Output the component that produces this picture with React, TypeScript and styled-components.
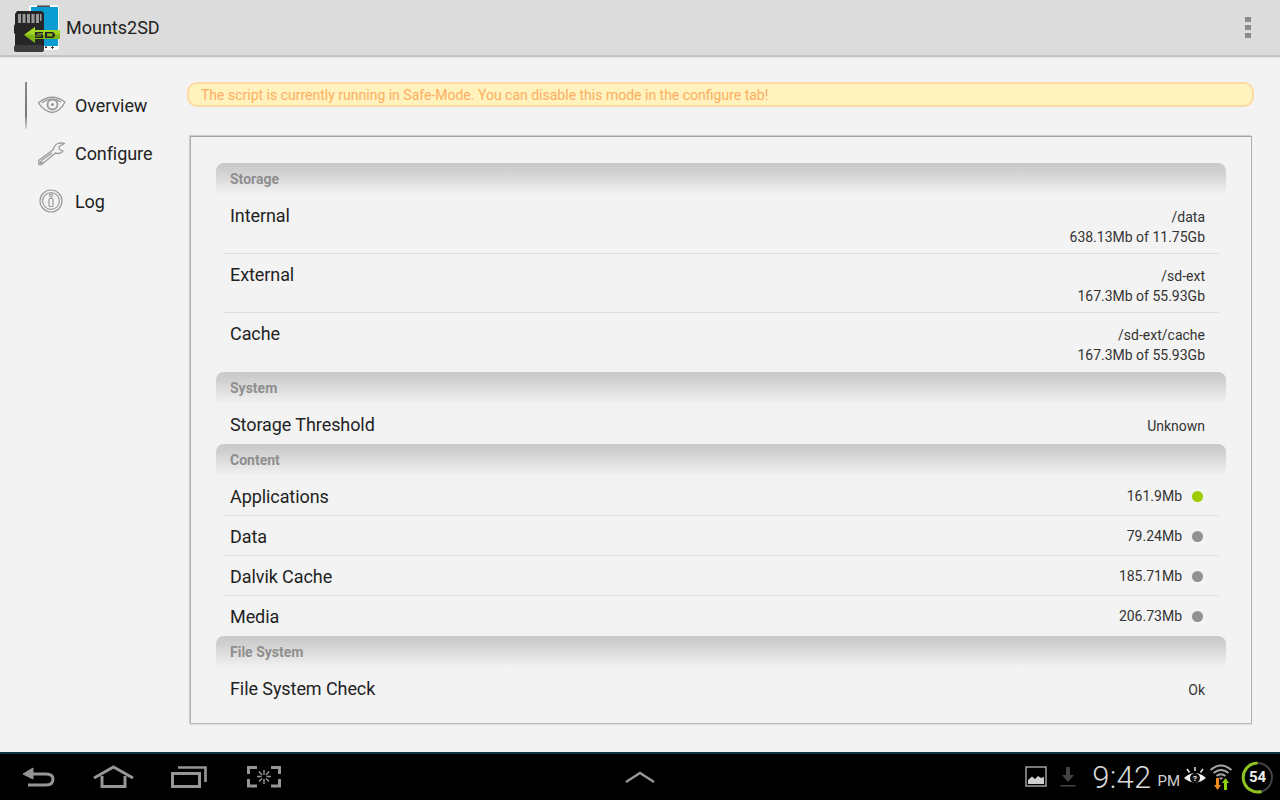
import React from "react";
import styled, { createGlobalStyle } from "styled-components";

const Global = createGlobalStyle`
  html, body { margin: 0; padding: 0; background: #f3f3f3; }
  body { font-family: Roboto, "Liberation Sans", sans-serif; }
`;

const Screen = styled.div`
  width: 1280px; height: 800px; display: flex; flex-direction: column; overflow: hidden; background: #f3f3f3;
`;
const ActionBar = styled.header`
  height: 55px; flex: none; display: flex; align-items: center; padding: 0 14px 0 14px;
  background: #dcdcdc; border-bottom: 2px solid #c4c4c4; box-shadow: 0 1px 1px #e4e4e4;
`;
const Logo = styled.svg`width: 46px; height: 55px; flex: none;`;
const AppTitle = styled.h1`
  margin: 0 0 0 6px; flex: 1; font-size: 18px; font-weight: 400; color: #222;
`;
const Overflow = styled.div`display: flex; flex-direction: column; gap: 3px; margin-right: 15px;`;
const OverflowDot = styled.span`width: 6px; height: 5px; background: #8b8b8b;`;

const Main = styled.main`flex: 1; display: flex; min-height: 0;`;
const Side = styled.nav`width: 187px; flex: none; padding: 25px 0 0 25px; box-sizing: border-box;`;
const NavItem = styled.div<{ $active?: boolean }>`
  height: 48px; display: flex; align-items: center; padding: 0 0 2px 13px; box-sizing: border-box;
  gap: 9px; font-size: 18px; color: #222; letter-spacing: -0.08px;
  background: ${p => (p.$active ? "linear-gradient(#8a8a8a, #777 70%, #d8d8d8) left top / 2px 47px no-repeat" : "none")};
`;
const NavIcon = styled.svg`width: 28px; height: 28px; flex: none;`;

const Content = styled.div`flex: 1; padding: 25px 26px 0 0; display: flex; flex-direction: column;`;
const Alert = styled.div`
  height: 25px; box-sizing: border-box; border: 2px solid #fdd9a4; border-radius: 10px;
  background: #fff2bd; color: #fdae62; font-size: 14px; line-height: 22px; padding-left: 12px; width: 1067px;
`;
const Panel = styled.section`
  margin: 29px 2px 0 3px; height: 588px; box-sizing: border-box; padding: 26px 25px 0 25px; background: #f3f3f3;
  border: 1px solid #b0b0b0; border-top-color: #a4a4a4; border-bottom-color: #bcbcbc;
  box-shadow: -1px -1px 1px #d0d0d0, 0 1px 1px #ddd;
`;
const SectionHead = styled.div`
  height: 32px; box-sizing: border-box; padding: 8px 14px 0; font-size: 14px; line-height: 16px; font-weight: 700; color: #8e8e8e;
  border-radius: 8px 8px 0 0; background: linear-gradient(#c8c8c8, #d2d2d2 30%, #f3f3f3 100%);
`;
const Row = styled.div<{ $h: number; $line?: boolean }>`
  height: ${p => p.$h}px; box-sizing: border-box; margin: 0 7px 0 8px; padding: 0 14px 0 6px;
  display: flex; justify-content: space-between; align-items: flex-start;
  border-bottom: 1px solid ${p => (p.$line ? "#dedede" : "transparent")};
`;
const Name = styled.span`
  font-size: 18px; line-height: 22px; color: #1f1f1f; margin-top: 10px; letter-spacing: -0.08px;
`;
const Value = styled.div`
  font-size: 14px; line-height: 20px; color: #333; text-align: right; margin-top: 12px;
`;
const StatusValue = styled.div`
  display: flex; align-items: center; gap: 10px; font-size: 14px; line-height: 20px; color: #333;
  margin: 10px 2px 0 0;
`;
const Dot = styled.span<{ $on?: boolean }>`
  width: 11px; height: 11px; border-radius: 50%; background: ${p => (p.$on ? "#9ccb00" : "#919191")};
`;

const NavBar = styled.footer`
  height: 46px; flex: none; background: #000; border-top: 2px solid #0f3542; display: flex; align-items: center;
`;
const SysButtons = styled.div`display: flex; align-items: center; gap: 25px; padding-left: 13px; width: 615px; box-sizing: border-box; flex: none;`;
const SysIcon = styled.svg`width: 50px; height: 32px; flex: none;`;
const UpChevron = styled.svg`width: 32px; height: 14px; flex: none; margin-left: 9px;`;
const Tray = styled.div`margin-left: auto; display: flex; align-items: center; padding-right: 6px;`;
const TrayIcon = styled.svg<{ $ml?: number }>`flex: none; margin-left: ${p => p.$ml ?? 0}px;`;
const Clock = styled.span`font-size: 31px; font-weight: 300; color: #d8d8d8; margin-left: 15px; letter-spacing: 0.3px;`;
const Ampm = styled.span`font-size: 15px; color: #d0d0d0; margin: 8px 0 0 6px;`;
const Battery = styled.div`position: relative; width: 33px; height: 33px; margin-left: 8px;`;
const BatteryText = styled.span`
  position: absolute; inset: 0; display: flex; align-items: center; justify-content: center;
  font-size: 15px; font-weight: 700; color: #eee;
`;

type R = { name: string; value?: string; value2?: string; status?: boolean; h: number; line?: boolean };

const Storage: R[] = [
  { name: "Internal", value: "/data", value2: "638.13Mb of 11.75Gb", h: 59, line: true },
  { name: "External", value: "/sd-ext", value2: "167.3Mb of 55.93Gb", h: 59, line: true },
  { name: "Cache", value: "/sd-ext/cache", value2: "167.3Mb of 55.93Gb", h: 59 },
];
const Items: R[] = [
  { name: "Applications", value: "161.9Mb", status: true, h: 40, line: true },
  { name: "Data", value: "79.24Mb", status: false, h: 40, line: true },
  { name: "Dalvik Cache", value: "185.71Mb", status: false, h: 40, line: true },
  { name: "Media", value: "206.73Mb", status: false, h: 40 },
];

function DataRow({ r }: { r: R }) {
  return (
    <Row $h={r.h} $line={r.line}>
      <Name>{r.name}</Name>
      {r.status === undefined ? (
        <Value>
          <div>{r.value}</div>
          {r.value2 && <div>{r.value2}</div>}
        </Value>
      ) : (
        <StatusValue>
          {r.value}
          <Dot $on={r.status} />
        </StatusValue>
      )}
    </Row>
  );
}

export default function App() {
  return (
    <Screen>
      <Global />
      <ActionBar>
        <Logo viewBox="0 0 46 55">
          <rect x="15" y="5" width="30" height="45" rx="3" fill="#fff" />
          <rect x="17" y="7" width="27" height="39" fill="#0a9bd0" />
          <rect x="23" y="5.5" width="13" height="1.3" fill="#222" />
          <path d="M1 14 L3 11 H28 L30 13 V50 H1 V34 L0 33 V26 L1 24 Z" fill="#262626" />
          <path d="M0 47 Q0 45 3 45 H27 Q30 45 30 48 V50 Q30 52 27 52 H3 Q0 52 0 50 Z" fill="#3c3c3c" />
          <g fill="#9a9a9a">
            <rect x="4" y="14" width="3" height="9" /><rect x="8.5" y="14" width="3" height="9" />
            <rect x="13" y="14" width="3" height="9" /><rect x="17.5" y="14" width="3" height="9" />
            <rect x="22" y="14" width="3" height="9" /><rect x="26" y="14" width="1.5" height="7" />
          </g>
          <path d="M10 35 L21 27 V30 H46 V39 H21 V43 Z" fill="#7fb512" />
          <path d="M21 27 V30 H46 V34.5 H10.5 Z" fill="#a4d323" />
          <path d="M21 32 H29 V33.5 H23 V34.5 H29 V38 H21 V36.5 H27 V35.5 H21 Z M31 32 H39 L41 34 V36 L39 38 H31 Z M33 33.5 V36.5 H38.5 V33.5 Z" fill="#222" />
          <rect x="31" y="46.5" width="2" height="1.5" fill="#222" />
          <path d="M37 47.5 H40 M38.5 46 V49" stroke="#222" strokeWidth="0.8" />
        </Logo>
        <AppTitle>Mounts2SD</AppTitle>
        <Overflow><OverflowDot /><OverflowDot /><OverflowDot /></Overflow>
      </ActionBar>
      <Main>
        <Side>
          <NavItem $active>
            <NavIcon viewBox="0 0 28 28" fill="none" stroke="#9a9a9a">
              <path d="M0.5 12 Q13 1 27 11 Q22 21 14 21.5 Q6 20 0.5 12 Z" strokeWidth="1.3" />
              <path d="M4 12 Q13 5 23 11" strokeWidth="1.2" />
              <circle cx="14.5" cy="13.5" r="5" strokeWidth="1.8" />
              <circle cx="14.5" cy="13.5" r="1.6" fill="#9a9a9a" stroke="none" />
            </NavIcon>
            Overview
          </NavItem>
          <NavItem>
            <NavIcon viewBox="0 0 28 28" fill="none" stroke="#9a9a9a" strokeWidth="1.3" strokeLinejoin="round">
              <path d="M0.5 21.5 L15.5 10.5 Q16 6 20 4.5 Q23 3.5 26.5 4.5 L21 7.5 L21.5 10.5 L25 12 Q23.5 14.5 20 14.5 Q18 14.5 17.5 14 L3.5 25.5 Q1.5 26.5 0.5 25 Q-0.5 23 0.5 21.5 Z" />
              <path d="M3.5 21.5 L14 14" />
              <circle cx="2.8" cy="23.5" r="1.1" />
            </NavIcon>
            Configure
          </NavItem>
          <NavItem>
            <NavIcon viewBox="0 0 28 28" fill="none" stroke="#9a9a9a">
              <circle cx="13" cy="14" r="11" strokeWidth="1.2" />
              <circle cx="13" cy="14" r="8.4" strokeWidth="1.2" />
              <rect x="11" y="11.5" width="4" height="8" rx="1" strokeWidth="1.2" />
              <circle cx="13" cy="8.6" r="1.5" strokeWidth="1.1" />
            </NavIcon>
            Log
          </NavItem>
        </Side>
        <Content>
          <Alert>The script is currently running in Safe-Mode. You can disable this mode in the configure tab!</Alert>
          <Panel>
            <SectionHead>Storage</SectionHead>
            {Storage.map(r => <DataRow key={r.name} r={r} />)}
            <SectionHead>System</SectionHead>
            <DataRow r={{ name: "Storage Threshold", value: "Unknown", h: 40 }} />
            <SectionHead>Content</SectionHead>
            {Items.map(r => <DataRow key={r.name} r={r} />)}
            <SectionHead>File System</SectionHead>
            <DataRow r={{ name: "File System Check", value: "Ok", h: 40 }} />
          </Panel>
        </Content>
      </Main>
      <NavBar>
        <SysButtons>
          <SysIcon viewBox="0 0 50 32" fill="none" stroke="#969696" strokeWidth="3">
            <path d="M15 13 H33 Q40 13 40 18 Q40 24 33 24 H15" />
            <path d="M10 13 L20 7 V18 Z" fill="#969696" strokeWidth="1" />
          </SysIcon>
          <SysIcon viewBox="0 0 50 32" fill="none" stroke="#969696" strokeWidth="3">
            <path d="M6 17 L25.5 6 L45 17" />
            <path d="M14 15 V25.5 H37 V15" />
          </SysIcon>
          <SysIcon viewBox="0 0 50 32" fill="none" stroke="#969696" strokeWidth="3">
            <rect x="9.5" y="12.5" width="27" height="13" />
            <path d="M15 6.5 H42.5 V21" strokeWidth="2.6" />
          </SysIcon>
          <SysIcon viewBox="0 0 50 32" fill="none" stroke="#969696" strokeWidth="3">
            <path d="M10.5 13 V6.5 H19 M33 6.5 H41.5 V13 M10.5 18 V25 H19 M33 25 H41.5 V18" />
            <path d="M26 9 V14 M26 18 V23 M19 15.5 H23.5 M28.5 15.5 H33 M21 10.5 L24 14 M31 10.5 L28 14 M21 20.5 L24 17.5 M31 20.5 L28 17.5" strokeWidth="1.4" />
          </SysIcon>
        </SysButtons>
        <UpChevron viewBox="0 0 32 14" fill="none" stroke="#969696" strokeWidth="2.4">
          <path d="M2 12 L16 3 L30 12" />
        </UpChevron>
        <Tray>
          <TrayIcon width="22" height="22" viewBox="0 0 22 22">
            <rect x="1" y="1" width="20" height="19" fill="none" stroke="#b8b8b8" strokeWidth="1.3" />
            <path d="M3 18 V14 L7 10.5 L10 13 L13 10 L16 12 L19 11 V18 Z" fill="#cfcfcf" />
          </TrayIcon>
          <TrayIcon width="18" height="24" viewBox="0 0 18 24" $ml={12}>
            <path d="M7 2 H11 V10 H15 L9 17 L3 10 H7 Z" fill="#444" />
            <rect x="1.5" y="20" width="15" height="1.5" fill="#444" />
          </TrayIcon>
          <Clock>9:42</Clock>
          <Ampm>PM</Ampm>
          <TrayIcon width="24" height="22" viewBox="0 0 24 22" $ml={3}>
            <path d="M1 12 Q12 2 23 12 Q12 21 1 12 Z" fill="#f2f2f2" />
            <circle cx="12" cy="12" r="5" fill="#111" />
            <text x="12" y="15" fontSize="8" fontWeight="700" fill="#f2f2f2" textAnchor="middle" fontFamily="Roboto">?</text>
            <path d="M12 1 V5 M4 3 L6.5 6.5 M20 3 L17.5 6.5" stroke="#f2f2f2" strokeWidth="1.4" />
          </TrayIcon>
          <TrayIcon width="24" height="28" viewBox="0 0 24 28" $ml={2}>
            <g fill="none" stroke="#a8a8a8" strokeWidth="2">
              <path d="M1.5 7 Q12 -2 22.5 7" />
              <path d="M4.5 10 Q12 4 19.5 10" />
              <path d="M7.5 13 Q12 9.5 16.5 13" />
            </g>
            <path d="M12 17 L9.5 14.5 L14.5 14.5 Z" fill="#a8a8a8" />
            <path d="M7 15 H10 V22 H12 L8.5 27 L5 22 H7 Z" fill="#f08c1e" />
            <path d="M15 27 H18 V20 H20 L16.5 15 L13 20 H15 Z" fill="#8fd10c" />
          </TrayIcon>
          <Battery>
            <svg width="33" height="33" viewBox="0 0 33 33" fill="none" strokeWidth="3">
              <circle cx="16.5" cy="16.5" r="14.5" stroke="#444" strokeWidth="2" />
              <path d="M16.5 2 A14.5 14.5 0 1 0 20.5 30.5" stroke="#8fc31f" />
            </svg>
            <BatteryText>54</BatteryText>
          </Battery>
        </Tray>
      </NavBar>
    </Screen>
  );
}
